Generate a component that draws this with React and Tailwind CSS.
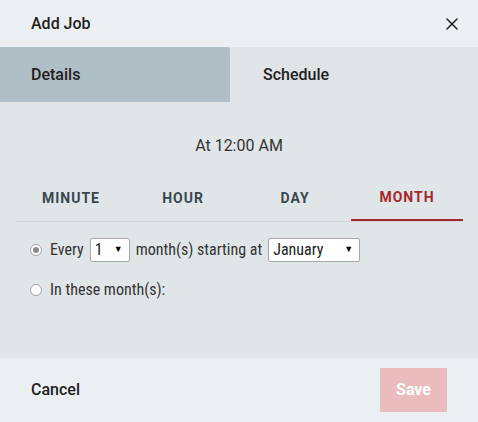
import { X } from "lucide-react";

const Radio = ({ checked }) => (
  <span className="w-[12px] h-[12px] mr-[2px] rounded-full border border-[#a0a0a0] bg-white flex items-center justify-center shrink-0">
    {checked && <span className="w-[6px] h-[6px] rounded-full bg-[#8a8a8a]" />}
  </span>
);

const FakeSelect = ({ value, width }) => (
  <span
    className={`${width} h-[24px] bg-white border border-[#a9a9a9] rounded-[2px] flex items-center justify-between pl-[4px] pr-[6px] text-[16px] text-[#222]`}
  >
    <span>{value}</span>
    <span className="text-[9px] text-black">▼</span>
  </span>
);

const App = () => {
  const units = ["MINUTE", "HOUR", "DAY", "MONTH"];
  return (
    <div className="w-[478px] h-[422px] flex flex-col bg-[#eceff1] text-[#212121] font-['Roboto',sans-serif]">
      <div className="h-[47px] flex items-center justify-between pl-[31px] pr-[16px]">
        <span className="text-[16px] font-medium">Add Job</span>
        <X size={20} strokeWidth={1.75} className="text-[#222]" />
      </div>

      <div className="h-[55px] flex bg-[#dfe4e7]">
        <div className="w-[230px] bg-[#b0bec5] flex items-center pl-[31px] text-[16px] font-medium rounded-tr-[3px]">
          Details
        </div>
        <div className="flex-1 flex items-center pl-[33px] text-[16px] font-medium">
          Schedule
        </div>
      </div>

      <div className="flex-1 bg-[#e0e5e8] px-[15px] pt-[34px]">
        <div className="text-center text-[16px] text-[#333] leading-[20px]">At 12:00 AM</div>
        <div className="mt-[20px] grid grid-cols-4 border-b border-[#cfd5d9]">
          {units.map((u) => (
            <div
              key={u}
              className={`h-[45px] flex items-center justify-center text-[14px] font-bold tracking-[1px] ${
                u === "MONTH"
                  ? "text-[#a4282b] border-b-2 border-[#a4282b] -mb-[1px]"
                  : "text-[#37474f]"
              }`}
            >
              {u}
            </div>
          ))}
        </div>

        <div className="pl-[15px] pt-[16px] flex flex-col gap-[16px] text-[16px] text-[#333] font-['Roboto_Condensed','Roboto',sans-serif]">
          <div className="flex items-center gap-[6px]">
            <Radio checked />
            <span>Every</span>
            <FakeSelect value="1" width="w-[40px]" />
            <span>month(s) starting at</span>
            <FakeSelect value="January" width="w-[92px]" />
          </div>
          <div className="flex items-center gap-[6px]">
            <Radio />
            <span>In these month(s):</span>
          </div>
        </div>
      </div>

      <div className="h-[64px] flex items-center justify-between pl-[31px] pr-[31px]">
        <span className="text-[16px] font-medium">Cancel</span>
        <button className="w-[67px] h-[44px] bg-[#ebbcbd] text-white text-[16px] font-bold">
          Save
        </button>
      </div>
    </div>
  );
};

export default App;
